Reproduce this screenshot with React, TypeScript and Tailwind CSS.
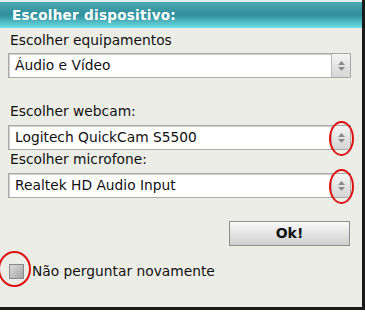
import React from "react";

function Spinner() {
  return (
    <div className="w-[19px] self-stretch border-l border-[#b8b8b8] bg-gradient-to-b from-[#f4f4f4] to-[#d6d6d6] flex flex-col items-center justify-center gap-[2px]">
      <svg width="7" height="4" viewBox="0 0 7 4"><path d="M0 4 L3.5 0 L7 4 Z" fill="#8a8a8a" /></svg>
      <svg width="7" height="4" viewBox="0 0 7 4"><path d="M0 0 L3.5 4 L7 0 Z" fill="#8a8a8a" /></svg>
    </div>
  );
}

function Select({ value }: { value: string }) {
  return (
    <div className="mx-[8px] h-[25px] w-[343px] flex border border-[#a9a9a9] bg-white shadow-[inset_1px_1px_0_#d0d0d0]">
      <div className="flex-1 flex items-center pl-[6px] text-[13.8px] text-[#111]">{value}</div>
      <Spinner />
    </div>
  );
}

function Circle({ className }: { className: string }) {
  return <div className={"absolute rounded-[50%] border-2 border-[#e01010] " + className} />;
}

export default function App() {
  return (
    <div className="w-[365px] h-[315px] bg-white relative overflow-hidden" style={{ fontFamily: '"DejaVu Sans", Verdana, sans-serif' }}>
      <div className="w-[365px] h-[310px] border-r-[3px] border-b-[3px] border-[#1a1a1a] bg-[#ecede7] flex flex-col">
        <div className="h-[2px] bg-[#e6eeee]" />
        <div className="h-[26px] bg-gradient-to-b from-[#4aa9b4] via-[#2f8e99] to-[#6fe2ea] flex items-center pl-[12px]">
          <span className="text-white font-bold text-[13.5px] tracking-[0.3px]">Escolher dispositivo:</span>
        </div>
        <div className="pl-[10px] pt-[3px] text-[13.8px] text-[#111] leading-[18px]">Escolher equipamentos</div>
        <div className="h-[4px]" />
        <Select value="Áudio e Vídeo" />
        <div className="h-[24px]" />
        <div className="pl-[10px] text-[13.8px] text-[#111] leading-[18px]">Escolher webcam:</div>
        <div className="h-[5px]" />
        <Select value="Logitech QuickCam S5500" />
        <div className="pl-[10px] text-[13.8px] text-[#111] leading-[18px]">Escolher microfone:</div>
        <div className="h-[5px]" />
        <Select value="Realtek HD Audio Input" />
        <div className="h-[23px]" />
        <div className="flex justify-end pr-[12px]">
          <div className="w-[121px] h-[25px] border border-[#8f8f8f] bg-gradient-to-b from-[#fafafa] to-[#cfcfcf] flex items-center justify-center text-[14px] font-bold text-[#111]">Ok!</div>
        </div>
        <div className="h-[15px]" />
        <div className="flex items-center pl-[9px]">
          <div className="w-[15px] h-[15px] border border-[#8a8a8a] bg-gradient-to-br from-[#dcdcdc] to-[#a4a4a4]" />
          <span className="pl-[8px] text-[13.8px] text-[#111]">Não perguntar novamente</span>
        </div>
      </div>
      <Circle className="left-[329px] top-[121px] w-[25px] h-[35px]" />
      <Circle className="left-[329px] top-[169px] w-[25px] h-[35px]" />
      <Circle className="left-[-2px] top-[251px] w-[33px] h-[36px]" />
    </div>
  );
}
